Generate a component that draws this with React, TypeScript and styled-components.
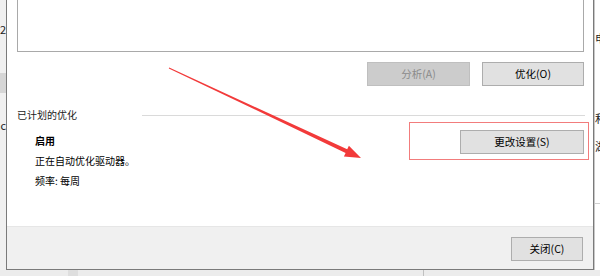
import React from "react";
import styled, { createGlobalStyle } from "styled-components";

const Global = createGlobalStyle`
  html, body { margin: 0; padding: 0; width: 600px; height: 276px; overflow: hidden; background: #f0f0f0; }
  #root { width: 600px; height: 276px; }
  * { box-sizing: border-box; }
`;

const font = `"Noto Sans CJK SC", "Noto Sans", sans-serif`;

const Page = styled.div`
  position: relative;
  width: 600px;
  height: 276px;
  display: flex;
  flex-direction: column;
  font-family: ${font};
  font-size: 10px;
  color: #000;
`;

const Stage = styled.div`
  display: flex;
  height: 270px;
`;

const Backdrop = styled.div<{ $side: "left" | "right" }>`
  width: ${(p) => (p.$side === "left" ? 6 : 6)}px;
  height: 270px;
  overflow: hidden;
  background: ${(p) => (p.$side === "left" ? "#f0f0f0" : "#ffffff")};
  display: flex;
  flex-direction: column;
  align-items: ${(p) => (p.$side === "left" ? "flex-end" : "flex-start")};
  border-left: ${(p) => (p.$side === "right" ? "1px solid #c8c8c8" : "none")};
`;

const Frag = styled.div<{ $top: number; $band?: boolean }>`
  margin-top: ${(p) => p.$top}px;
  height: ${(p) => (p.$band ? 20 : 14)}px;
  line-height: 14px;
  white-space: nowrap;
  font-size: 11px;
  color: #222;
  background: ${(p) => (p.$band ? "#d6d6d6" : "transparent")};
  width: ${(p) => (p.$band ? "100%" : "auto")};
`;

const RightRule = styled.div`
  margin-top: 50px;
  width: 100%;
  height: 1px;
  background: #d0d0d0;
`;

const Dialog = styled.div`
  width: 588px;
  height: 270px;
  display: flex;
  flex-direction: column;
  border-left: 1px solid #7a7a7a;
  border-right: 1px solid #7a7a7a;
  border-bottom: 1px solid #7a7a7a;
  background: #fff;
`;

const Body = styled.div`
  height: 226px;
  display: flex;
  flex-direction: column;
  background: #fff;
`;

const ListBox = styled.div`
  margin-left: 10px;
  width: 567px;
  height: 52px;
  border: 1px solid #a9a9a9;
  border-top: none;
  background: #fff;
`;

const ButtonRow = styled.div`
  margin-top: 10px;
  display: flex;
  justify-content: flex-end;
  gap: 12px;
  padding-right: 9px;
`;

const Button = styled.button<{ $w: number; $disabled?: boolean }>`
  width: ${(p) => p.$w}px;
  height: 24px;
  padding: 0;
  margin: 0;
  font-family: ${font};
  font-size: 10.5px;
  line-height: 22px;
  text-align: center;
  color: ${(p) => (p.$disabled ? "#8a8a8a" : "#000")};
  background: ${(p) => (p.$disabled ? "#cccccc" : "#e1e1e1")};
  border: 1px solid ${(p) => (p.$disabled ? "#bfbfbf" : "#adadad")};
  border-radius: 0;
`;

const GroupHeader = styled.div`
  margin-top: 22px;
  height: 14px;
  display: flex;
  align-items: center;
`;

const GroupLabel = styled.div`
  width: 135px;
  padding-left: 10px;
  font-size: 10px;
  line-height: 14px;
  color: #1a1a1a;
`;

const GroupRule = styled.div`
  flex: 1;
  height: 1px;
  margin-right: 8px;
  background: #dadada;
`;

const GroupBody = styled.div`
  display: flex;
  justify-content: space-between;
  align-items: flex-start;
`;

const InfoColumn = styled.div`
  padding-left: 28px;
  padding-top: 9px;
  display: flex;
  flex-direction: column;
`;

const InfoLine = styled.div<{ $bold?: boolean }>`
  height: 20px;
  line-height: 20px;
  font-size: 10px;
  font-weight: ${(p) => (p.$bold ? 700 : 400)};
  color: #000;
`;

const Highlight = styled.div`
  margin-right: 4px;
  width: 180px;
  height: 38px;
  border: 1px solid #f27c7c;
  display: flex;
  justify-content: flex-end;
  align-items: flex-start;
  padding-top: 7px;
  padding-right: 4px;
`;

const Footer = styled.div`
  flex: 1;
  background: #f0f0f0;
  border-top: 1px solid #e6e6e6;
  display: flex;
  justify-content: flex-end;
  align-items: flex-start;
  padding-top: 10px;
  padding-right: 10px;
`;

const BottomStrip = styled.div`
  height: 6px;
  display: flex;
  background: #ececec;
`;

const StripMark = styled.div<{ $left: number; $w: number; $c: string }>`
  margin-left: ${(p) => p.$left}px;
  width: ${(p) => p.$w}px;
  background: ${(p) => p.$c};
`;

const ArrowLayer = styled.svg`
  position: absolute;
  left: 0;
  top: 0;
  pointer-events: none;
`;

export default function App() {
  return (
    <>
      <Global />
      <Page>
        <Stage>
          <Backdrop $side="left">
            <Frag $top={22}>12</Frag>
            <Frag $top={37} $band />
            <Frag $top={25}>ac</Frag>
          </Backdrop>
          <Dialog>
            <Body>
              <ListBox />
              <ButtonRow>
                <Button $w={103} $disabled>分析(A)</Button>
                <Button $w={102}>优化(O)</Button>
              </ButtonRow>
              <GroupHeader>
                <GroupLabel>已计划的优化</GroupLabel>
                <GroupRule />
              </GroupHeader>
              <GroupBody>
                <InfoColumn>
                  <InfoLine $bold>启用</InfoLine>
                  <InfoLine>正在自动优化驱动器。</InfoLine>
                  <InfoLine>频率: 每周</InfoLine>
                </InfoColumn>
                <Highlight>
                  <Button $w={124}>更改设置(S)</Button>
                </Highlight>
              </GroupBody>
            </Body>
            <Footer>
              <Button $w={72}>关闭(C)</Button>
            </Footer>
          </Dialog>
          <Backdrop $side="right">
            <Frag $top={31}>电</Frag>
            <Frag $top={66}>和</Frag>
            <Frag $top={14}>湖</Frag>
            <RightRule />
          </Backdrop>
        </Stage>
        <BottomStrip>
          <StripMark $left={68} $w={10} $c="#dedede" />
          <StripMark $left={345} $w={1} $c="#c0c0c0" />
        </BottomStrip>
        <ArrowLayer width="600" height="276" viewBox="0 0 600 276">
          <polygon
            points="169.2,67.6 347.2,149.3 348.9,145.7 361,158 343.9,156.5 345.6,152.9 168.8,68.4"
            fill="#f23a3a"
          />
        </ArrowLayer>
      </Page>
    </>
  );
}
